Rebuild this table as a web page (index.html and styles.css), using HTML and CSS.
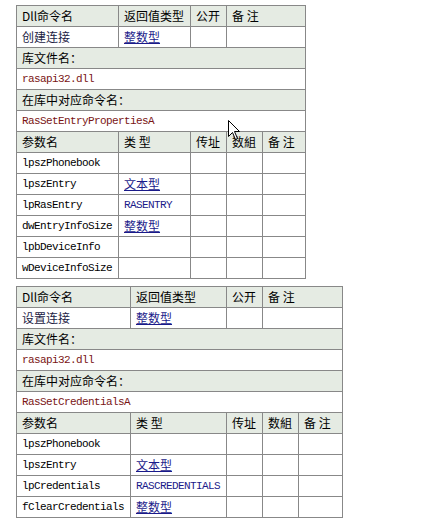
FILE: index.html
```
<!DOCTYPE html>
<html>
<head>
<meta charset="utf-8">
<link rel="stylesheet" href="styles.css">
</head>
<body>
<div class="page">
  <table class="api t1">
    <colgroup><col class="c1"><col class="c2"><col class="c3"><col class="c4"><col class="c5"></colgroup>
    <tr class="hd"><td>Dll命令名</td><td>返回值类型</td><td>公开</td><td colspan="2">备 注</td></tr>
    <tr><td class="name">创建连接</td><td><a class="type">整数型</a></td><td></td><td colspan="2"></td></tr>
    <tr class="hd"><td colspan="5">库文件名：</td></tr>
    <tr><td colspan="5" class="code">rasapi32.dll</td></tr>
    <tr class="hd"><td colspan="5">在库中对应命令名：</td></tr>
    <tr><td colspan="5" class="code">RasSetEntryPropertiesA</td></tr>
    <tr class="hd"><td>参数名</td><td>类 型</td><td>传址</td><td>数組</td><td>备 注</td></tr>
    <tr><td class="mono">lpszPhonebook</td><td></td><td></td><td></td><td></td></tr>
    <tr><td class="mono">lpszEntry</td><td><a class="type">文本型</a></td><td></td><td></td><td></td></tr>
    <tr><td class="mono">lpRasEntry</td><td class="mono struct">RASENTRY</td><td></td><td></td><td></td></tr>
    <tr><td class="mono">dwEntryInfoSize</td><td><a class="type">整数型</a></td><td></td><td></td><td></td></tr>
    <tr><td class="mono">lpbDeviceInfo</td><td></td><td></td><td></td><td></td></tr>
    <tr><td class="mono">wDeviceInfoSize</td><td></td><td></td><td></td><td></td></tr>
  </table>

  <table class="api t2">
    <colgroup><col class="c1"><col class="c2"><col class="c3"><col class="c4"><col class="c5"></colgroup>
    <tr class="hd"><td>Dll命令名</td><td>返回值类型</td><td>公开</td><td colspan="2">备 注</td></tr>
    <tr><td class="name">设置连接</td><td><a class="type">整数型</a></td><td></td><td colspan="2"></td></tr>
    <tr class="hd"><td colspan="5">库文件名：</td></tr>
    <tr><td colspan="5" class="code">rasapi32.dll</td></tr>
    <tr class="hd"><td colspan="5">在库中对应命令名：</td></tr>
    <tr><td colspan="5" class="code">RasSetCredentialsA</td></tr>
    <tr class="hd"><td>参数名</td><td>类 型</td><td>传址</td><td>数組</td><td>备 注</td></tr>
    <tr><td class="mono">lpszPhonebook</td><td></td><td></td><td></td><td></td></tr>
    <tr><td class="mono">lpszEntry</td><td><a class="type">文本型</a></td><td></td><td></td><td></td></tr>
    <tr><td class="mono">lpCredentials</td><td class="mono struct">RASCREDENTIALS</td><td></td><td></td><td></td></tr>
    <tr><td class="mono">fClearCredentials</td><td><a class="type">整数型</a></td><td></td><td></td><td></td></tr>
  </table>

  <svg class="cursor" width="13" height="21" viewBox="0 0 13 21">
    <path d="M0.5 0.5 L0.5 16.5 L4.5 12.5 L7.5 19.5 L9.5 18.5 L6.5 11.5 L11.5 11.5 Z" fill="#fff" stroke="#000" stroke-width="1"/>
  </svg>
</div>
</body>
</html>
```
FILE: styles.css
```
html, body {
  margin: 0;
  padding: 0;
  background: #fff;
}

.page {
  position: relative;
  padding: 5px 0 0 16px;
  font-family: "Noto Sans CJK SC", "Liberation Sans", sans-serif;
  font-size: 12px;
  color: #000;
}

.api {
  border-collapse: collapse;
  table-layout: fixed;
  border: 1px solid #888;
}

.api td {
  border: 1px solid #888;
  height: 20px;
  line-height: 20px;
  padding: 0 0 0 5px;
  white-space: nowrap;
  overflow: hidden;
  vertical-align: middle;
}

.api .hd td {
  background: #e5ebe3;
}

.t1 { width: 289px; }
.t1 .c1 { width: 102px; }
.t1 .c2 { width: 72px; }
.t1 .c3 { width: 36px; }
.t1 .c4 { width: 36px; }
.t1 .c5 { width: 43px; }

.t2 { width: 326px; margin-top: 7px; }
.t2 .c1 { width: 114px; }
.t2 .c2 { width: 96px; }
.t2 .c3 { width: 36px; }
.t2 .c4 { width: 36px; }
.t2 .c5 { width: 44px; }

.name {
  color: #1c1c44;
}

.type {
  color: #1a1a8a;
  text-decoration: underline;
}

.mono {
  font-family: "Liberation Mono", "DejaVu Sans Mono", monospace;
  font-size: 11px;
  letter-spacing: -0.6px;
}

.code {
  font-family: "Liberation Mono", "DejaVu Sans Mono", monospace;
  font-size: 11px;
  letter-spacing: -0.6px;
  color: #7a1414;
}

.struct {
  color: #1a1a8a;
}

.cursor {
  position: absolute;
  left: 228px;
  top: 120px;
}
```
